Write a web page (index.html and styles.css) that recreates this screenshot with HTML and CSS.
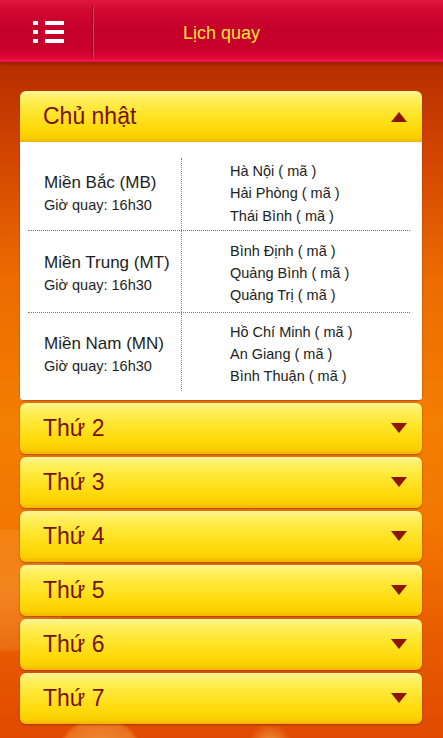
FILE: index.html
```html
<!DOCTYPE html>
<html lang="vi">
<head>
<meta charset="utf-8">
<title>Lịch quay</title>
<link rel="stylesheet" href="styles.css">
</head>
<body>
<header class="topbar">
  <div class="menu-cell">
    <svg class="menu-icon" width="31" height="23" viewBox="0 0 31 23">
      <rect x="0" y="0" width="5" height="4" fill="#fff"/>
      <rect x="12" y="0" width="19" height="4" fill="#fff"/>
      <rect x="0" y="9" width="5" height="4" fill="#fff"/>
      <rect x="12" y="9" width="19" height="4" fill="#fff"/>
      <rect x="0" y="18" width="5" height="4" fill="#fff"/>
      <rect x="12" y="18" width="19" height="4" fill="#fff"/>
    </svg>
  </div>
  <h1 class="title">Lịch quay</h1>
  <div class="spacer"></div>
</header>

<main class="list">
  <section class="day open">
    <div class="day-head">
      <span class="day-name">Chủ nhật</span>
      <span class="tri up"></span>
    </div>
    <div class="day-body">
      <div class="row">
        <div class="region">
          <div class="region-name">Miền Bắc (MB)</div>
          <div class="region-time">Giờ quay: 16h30</div>
        </div>
        <div class="provinces">
          <div>Hà Nội ( mã )</div>
          <div>Hải Phòng ( mã )</div>
          <div>Thái Bình ( mã )</div>
        </div>
      </div>
      <div class="row">
        <div class="region">
          <div class="region-name">Miền Trung (MT)</div>
          <div class="region-time">Giờ quay: 16h30</div>
        </div>
        <div class="provinces">
          <div>Bình Định ( mã )</div>
          <div>Quảng Bình ( mã )</div>
          <div>Quảng Trị ( mã )</div>
        </div>
      </div>
      <div class="row">
        <div class="region">
          <div class="region-name">Miền Nam (MN)</div>
          <div class="region-time">Giờ quay: 16h30</div>
        </div>
        <div class="provinces">
          <div>Hồ Chí Minh ( mã )</div>
          <div>An Giang ( mã )</div>
          <div>Bình Thuận ( mã )</div>
        </div>
      </div>
    </div>
  </section>

  <section class="day"><div class="day-head"><span class="day-name">Thứ 2</span><span class="tri down"></span></div></section>
  <section class="day"><div class="day-head"><span class="day-name">Thứ 3</span><span class="tri down"></span></div></section>
  <section class="day"><div class="day-head"><span class="day-name">Thứ 4</span><span class="tri down"></span></div></section>
  <section class="day"><div class="day-head"><span class="day-name">Thứ 5</span><span class="tri down"></span></div></section>
  <section class="day"><div class="day-head"><span class="day-name">Thứ 6</span><span class="tri down"></span></div></section>
  <section class="day"><div class="day-head"><span class="day-name">Thứ 7</span><span class="tri down"></span></div></section>
</main>
</body>
</html>
```

FILE: styles.css
```css
* { box-sizing: border-box; }

html, body {
  margin: 0;
  padding: 0;
}

body {
  width: 443px;
  height: 738px;
  overflow: hidden;
  font-family: "Liberation Sans", Arial, sans-serif;
  background:
    radial-gradient(circle at 8px 590px, rgba(255, 190, 90, 0.35) 0, rgba(255, 190, 90, 0.18) 60px, rgba(255, 190, 90, 0) 62px),
    radial-gradient(circle at 100px 760px, rgba(255, 220, 120, 0.55) 0, rgba(255, 200, 90, 0.3) 40px, rgba(255, 200, 90, 0) 44px),
    radial-gradient(circle at 270px 745px, rgba(255, 230, 140, 0.5) 0, rgba(255, 230, 140, 0) 22px),
    linear-gradient(to bottom,
      #b02a00 0px,
      #b83000 70px,
      #d44600 160px,
      #ec6c00 280px,
      #f47e00 420px,
      #f27800 520px,
      #e85c00 640px,
      #e04a00 738px);
}

/* ---------- top bar ---------- */
.topbar {
  height: 62px;
  display: grid;
  grid-template-columns: 94px 1fr 94px;
  align-items: center;
  background: linear-gradient(to bottom,
    #e2183e 0px,
    #d20a32 10px,
    #c4002a 30px,
    #c8002c 48px,
    #dc0636 58px,
    #f0104a 60px,
    #f0104a 62px);
  box-shadow: 0 2px 3px rgba(90, 10, 0, 0.45);
}

.menu-cell {
  height: 52px;
  margin-top: 2px;
  display: flex;
  align-items: center;
  padding-left: 33px;
  border-right: 1px solid #e8385c;
  box-shadow: inset -1px 0 0 #9c0018;
}

.menu-icon { display: block; }

.title {
  margin: 4px 0 0;
  text-align: center;
  font-size: 18px;
  font-weight: normal;
  color: #ffe23a;
  line-height: 1;
}

/* ---------- list ---------- */
.list {
  padding: 29px 21px 0 20px;
  display: flex;
  flex-direction: column;
  gap: 3px;
}

.day {
  border-radius: 6px;
  box-shadow: 0 1px 2px rgba(120, 30, 0, 0.55);
}

.day-head {
  height: 51px;
  display: flex;
  align-items: center;
  justify-content: space-between;
  padding: 0 15px 0 23px;
  border-radius: 6px;
  background: linear-gradient(to bottom,
    #fff69a 0px,
    #fff066 6px,
    #ffe838 18px,
    #ffdc10 34px,
    #fcd000 46px,
    #eeb400 51px);
}

.day.open .day-head {
  border-radius: 6px 6px 0 0;
}

.day-name {
  font-size: 23px;
  color: #761200;
  line-height: 1;
}

.tri {
  width: 0;
  height: 0;
  border-left: 8.5px solid transparent;
  border-right: 8.5px solid transparent;
}

.tri.up { border-bottom: 10px solid #8a1600; }
.tri.down { border-top: 10px solid #8a1600; }

/* ---------- open day body ---------- */
.day-body {
  background: #fff;
  padding: 16px 12px 9px 8px;
  border-radius: 0 0 3px 3px;
}

.row {
  display: flex;
  border-bottom: 1px dotted #a8684c;
}

.row:last-child { border-bottom: none; }

.region {
  width: 154px;
  padding: 9px 0 5px 16px;
  border-right: 1px dotted #d0607c;
  display: flex;
  flex-direction: column;
  justify-content: center;
  color: #1e1e1e;
}

.provinces {
  padding: 9px 0 5px 48px;
  font-size: 14.5px;
  line-height: 22.3px;
  color: #222;
}

.row:first-child .region,
.row:first-child .provinces { padding-top: 2px; padding-bottom: 3px; }

.row:last-child .region,
.row:last-child .provinces { padding-top: 8px; padding-bottom: 3px; }

.region-name {
  font-size: 17px;
  line-height: 23px;
}

.region-time {
  font-size: 14.5px;
  line-height: 22px;
}
```
